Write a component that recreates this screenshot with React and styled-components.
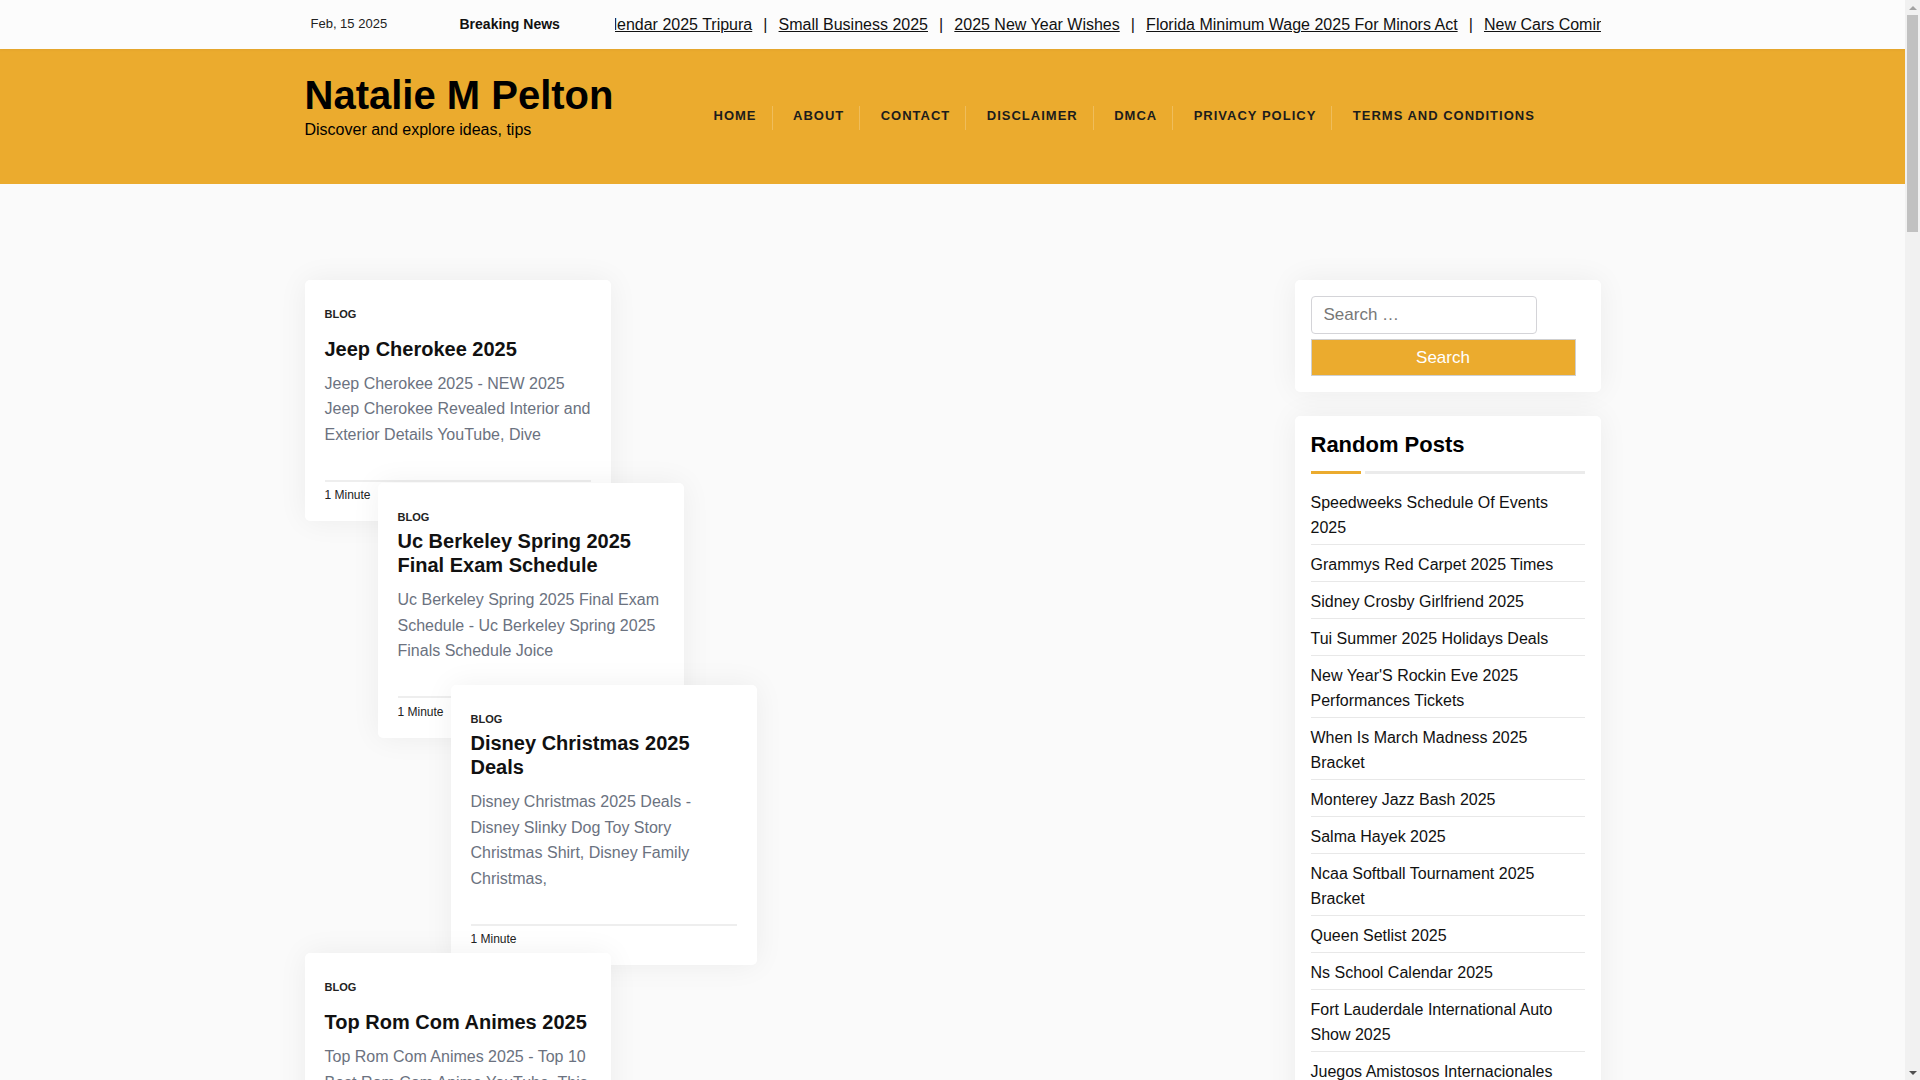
import React from "react";
import styled, { createGlobalStyle } from "styled-components";

const Global = createGlobalStyle`
  html, body { margin: 0; padding: 0; }
  body {
    margin-right: 15px;
    background: #fafafa;
    font-family: "Liberation Sans", Arial, Helvetica, sans-serif;
    color: #111;
  }
  * { box-sizing: border-box; }
  a { color: inherit; }
`;

const YELLOW = "#ebab2e";

/* Browser-style scrollbar drawn at the right edge, as in the reference */
const ScrollRail = styled.div`
  position: fixed;
  top: 0;
  right: 0;
  width: 15px;
  height: 100vh;
  background: #f1f1f1;
  display: flex;
  flex-direction: column;
  align-items: center;
  z-index: 10;
`;

const ScrollArrow = styled.div`
  height: 15px;
  width: 15px;
  display: flex;
  align-items: center;
  justify-content: center;
  &::before {
    content: "";
    width: 0;
    height: 0;
    border-left: 4px solid transparent;
    border-right: 4px solid transparent;
    ${(p) =>
      p.$down
        ? "border-top: 4px solid #505050;"
        : "border-bottom: 4px solid #a3a3a3;"}
  }
`;

const ScrollThumb = styled.div`
  width: 11px;
  height: 217px;
  background: #c1c1c1;
`;

const ScrollSpace = styled.div`
  flex: 1;
`;

const Container = styled.div`
  width: 1296px;
  margin: 0 auto;
`;

const TopBar = styled.div`
  background: #fcfcfc;
  height: 49px;
  box-shadow: 0 1px 3px rgba(0, 0, 0, 0.04);
  position: relative;
  z-index: 1;
`;

const TopInner = styled(Container)`
  display: flex;
  align-items: center;
  height: 49px;
`;

const DateText = styled.div`
  width: 155px;
  padding-left: 6px;
  font-size: 13px;
  color: #222;
  margin-top: -2px;
`;

const BreakingLabel = styled.div`
  width: 155px;
  font-size: 14px;
  font-weight: 700;
  color: #111;
  margin-top: -1px;
`;

const Ticker = styled.div`
  flex: 1;
  overflow: hidden;
  white-space: nowrap;
`;

const TickerTrack = styled.div`
  display: flex;
  margin-left: -21.5px;
  font-size: 16px;
  color: #111;
`;

const TickerLink = styled.a`
  text-decoration: underline;
  color: #111;
`;

const TickerSep = styled.span`
  padding: 0 11.1px;
`;

const Header = styled.header`
  background: ${YELLOW};
  height: 135px;
`;

const HeaderInner = styled(Container)`
  display: flex;
  align-items: flex-start;
  padding-top: 24px;
`;

const Brand = styled.div`
  width: 388.5px;
`;

const SiteTitle = styled.h1`
  margin: 0;
  font-size: 40px;
  line-height: 44px;
  font-weight: 700;
  color: #000;
`;

const Tagline = styled.p`
  margin: 0.8px 0 0;
  font-size: 16px;
  line-height: 24px;
  color: #000;
`;

const Nav = styled.nav`
  display: flex;
  margin-top: 33px;
`;

const NavItem = styled.a`
  display: block;
  padding: 0 15px 4px 20.5px;
  line-height: 20px;
  font-size: 13px;
  font-weight: 700;
  letter-spacing: 1px;
  text-transform: uppercase;
  text-decoration: none;
  color: #1c1c1c;
  &:not(:last-child) {
    border-right: 1px solid rgba(255, 255, 255, 0.22);
  }
`;

const Main = styled(Container)`
  display: grid;
  grid-template-columns: 966px 306px;
  column-gap: 24px;
  align-items: start;
  padding-top: 96px;
  padding-bottom: 60px;
  min-height: 5040px;
`;

const PostColumn = styled.div`
  display: flex;
  flex-direction: column;
  align-items: flex-start;
`;

const Card = styled.article`
  width: 306px;
  background: #fff;
  border-radius: 5px;
  box-shadow: 0 0 30px rgba(0, 0, 0, 0.06);
  padding: 26.2px 20px 17px;
  margin-left: ${(p) => p.$shift}px;
  margin-top: ${(p) => p.$overlap}px;
  position: relative;
`;

const CardHead = styled.div`
  display: flex;
  flex-direction: column;
  justify-content: space-between;
  gap: 4px;
  min-height: 54.4px;
`;

const Category = styled.a`
  display: block;
  font-size: 11px;
  line-height: 16px;
  font-weight: 700;
  text-transform: uppercase;
  text-decoration: none;
  color: #222;
`;

const CardTitle = styled.h2`
  margin: 0;
  font-size: 20px;
  line-height: 24px;
  font-weight: 700;
  color: #111;
`;

const Excerpt = styled.p`
  margin: 10.2px 0 0;
  font-size: 16px;
  line-height: 25.6px;
  color: #6b7280;
`;

const CardFooter = styled.div`
  margin-top: 32px;
  border-top: 2px solid #eeeeee;
  padding-top: 4.8px;
  font-size: 12px;
  line-height: 18px;
  color: #222;
`;

const Sidebar = styled.aside`
  display: flex;
  flex-direction: column;
  gap: 24.3px;
`;

const Widget = styled.section`
  background: #fff;
  border-radius: 5px;
  box-shadow: 0 0 30px rgba(0, 0, 0, 0.06);
  padding: ${(p) => p.$pad};
`;

const SearchForm = styled.form`
  display: flex;
  flex-direction: column;
  gap: 5px;
`;

const SearchInput = styled.input`
  width: 226px;
  height: 38px;
  border: 1px solid #d4d4d8;
  border-radius: 4px;
  padding: 0 12px;
  font-family: inherit;
  font-size: 17px;
  color: #333;
  background: #fff;
  &::placeholder {
    color: #777;
  }
`;

const SearchButton = styled.button`
  width: 265px;
  height: 37px;
  background: ${YELLOW};
  border: 1px solid #cfcfcf;
  color: #fff;
  font-family: inherit;
  font-size: 17px;
  padding: 0;
`;

const WidgetTitle = styled.h3`
  margin: 0;
  font-size: 22px;
  line-height: 26.4px;
  font-weight: 700;
  color: #000;
`;

const TitleRule = styled.div`
  display: flex;
  gap: 4px;
  margin-top: 12.3px;
  height: 3px;
`;

const RuleBar = styled.span`
  display: block;
  height: 3px;
  background: ${(p) => (p.$accent ? YELLOW : "#ebebeb")};
  width: ${(p) => (p.$accent ? "50px" : "auto")};
  flex: ${(p) => (p.$accent ? "none" : "1")};
`;

const PostList = styled.ul`
  list-style: none;
  margin: 9.5px 0 0;
  padding: 0;
`;

const PostItem = styled.li`
  padding: 7px 0 4px;
  line-height: 25px;
  font-size: 16px;
  border-bottom: 1px solid #e8e8e8;
`;

const PostLink = styled.a`
  text-decoration: none;
  color: #111;
`;

const tickerItems = [
  "Calendar 2025 Tripura",
  "Small Business 2025",
  "2025 New Year Wishes",
  "Florida Minimum Wage 2025 For Minors Act",
  "New Cars Coming 2025",
  "Best Time To Visit Japan 2025",
];

const navItems = [
  "Home",
  "About",
  "Contact",
  "Disclaimer",
  "DMCA",
  "Privacy Policy",
  "Terms and Conditions",
];

const posts = [
  {
    title: "Jeep Cherokee 2025",
    excerpt:
      "Jeep Cherokee 2025 - NEW 2025 Jeep Cherokee Revealed Interior and Exterior Details YouTube, Dive",
    shift: 0,
    overlap: 0,
  },
  {
    title: "Uc Berkeley Spring 2025 Final Exam Schedule",
    excerpt:
      "Uc Berkeley Spring 2025 Final Exam Schedule - Uc Berkeley Spring 2025 Finals Schedule Joice",
    shift: 73,
    overlap: -38.7,
  },
  {
    title: "Disney Christmas 2025 Deals",
    excerpt:
      "Disney Christmas 2025 Deals - Disney Slinky Dog Toy Story Christmas Shirt, Disney Family Christmas,",
    shift: 146,
    overlap: -52.7,
  },
  {
    title: "Top Rom Com Animes 2025",
    excerpt:
      "Top Rom Com Animes 2025 - Top 10 Best Rom Com Anime YouTube, This Year Season Picks",
    shift: 0,
    overlap: -12.3,
  },
];

const randomPosts = [
  "Speedweeks Schedule Of Events 2025",
  "Grammys Red Carpet 2025 Times",
  "Sidney Crosby Girlfriend 2025",
  "Tui Summer 2025 Holidays Deals",
  "New Year'S Rockin Eve 2025 Performances Tickets",
  "When Is March Madness 2025 Bracket",
  "Monterey Jazz Bash 2025",
  "Salma Hayek 2025",
  "Ncaa Softball Tournament 2025 Bracket",
  "Queen Setlist 2025",
  "Ns School Calendar 2025",
  "Fort Lauderdale International Auto Show 2025",
  "Juegos Amistosos Internacionales 2025",
  "Chinese New Year 2025 Animal",
  "Nfl Draft 2025 Location",
];

export default function App() {
  return (
    <>
      <Global />
      <TopBar>
        <TopInner>
          <DateText>Feb, 15 2025</DateText>
          <BreakingLabel>Breaking News</BreakingLabel>
          <Ticker>
            <TickerTrack>
              {tickerItems.map((t, i) => (
                <React.Fragment key={t}>
                  {i > 0 && <TickerSep>|</TickerSep>}
                  <TickerLink href="#">{t}</TickerLink>
                </React.Fragment>
              ))}
            </TickerTrack>
          </Ticker>
        </TopInner>
      </TopBar>

      <Header>
        <HeaderInner>
          <Brand>
            <SiteTitle>Natalie M Pelton</SiteTitle>
            <Tagline>Discover and explore ideas, tips</Tagline>
          </Brand>
          <Nav>
            {navItems.map((n) => (
              <NavItem key={n} href="#">
                {n}
              </NavItem>
            ))}
          </Nav>
        </HeaderInner>
      </Header>

      <Main>
        <PostColumn>
          {posts.map((p) => (
            <Card key={p.title} $shift={p.shift} $overlap={p.overlap}>
              <CardHead>
                <Category href="#">Blog</Category>
                <CardTitle>{p.title}</CardTitle>
              </CardHead>
              <Excerpt>{p.excerpt}</Excerpt>
              <CardFooter>1 Minute</CardFooter>
            </Card>
          ))}
        </PostColumn>

        <Sidebar>
          <Widget $pad="16px 16px 16px">
            <SearchForm onSubmit={(e) => e.preventDefault()}>
              <SearchInput type="search" placeholder="Search …" />
              <SearchButton type="submit">Search</SearchButton>
            </SearchForm>
          </Widget>
          <Widget $pad="15.5px 16px 16px">
            <WidgetTitle>Random Posts</WidgetTitle>
            <TitleRule>
              <RuleBar $accent />
              <RuleBar />
            </TitleRule>
            <PostList>
              {randomPosts.map((r) => (
                <PostItem key={r}>
                  <PostLink href="#">{r}</PostLink>
                </PostItem>
              ))}
            </PostList>
          </Widget>
        </Sidebar>
      </Main>

      <ScrollRail aria-hidden="true">
        <ScrollArrow />
        <ScrollThumb />
        <ScrollSpace />
        <ScrollArrow $down />
      </ScrollRail>
    </>
  );
}
